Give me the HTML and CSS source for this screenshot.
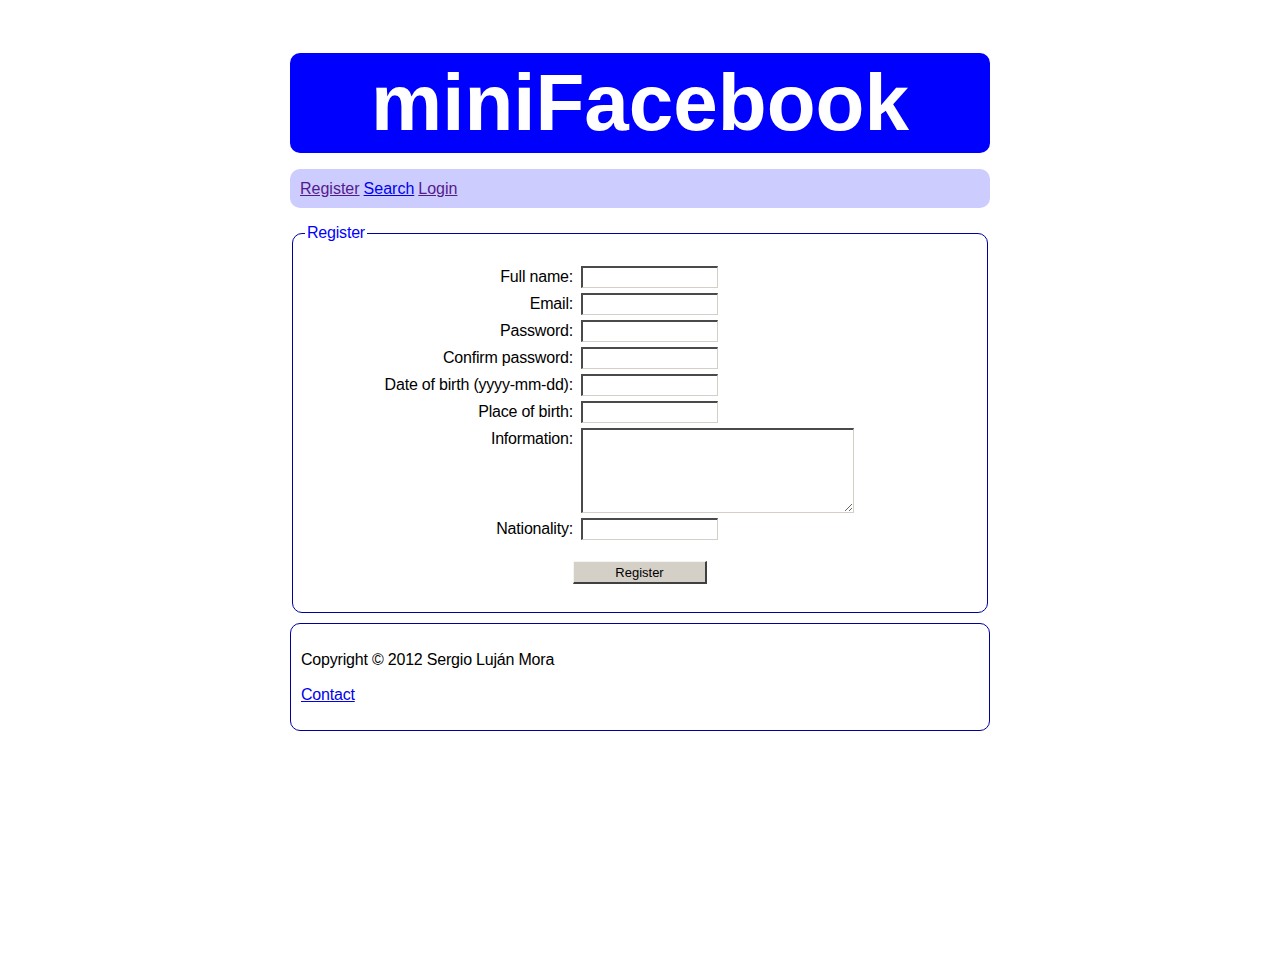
FILE: index.html
```html
<!DOCTYPE html>
<html>
<head>
<meta charset="utf-8">
<title>miniFacebook</title>
<link rel="stylesheet" href="styles.css">
</head>
<body>
<div class="page">
  <header class="header"><h1 class="title">miniFacebook</h1></header>
  <nav class="nav">
    <a class="visited" href="#">Register</a> <a href="#">Search</a> <a class="visited" href="#">Login</a>
  </nav>
  <form class="form">
    <fieldset class="fieldset">
      <legend class="legend">Register</legend>
      <div class="row"><label class="label">Full name:</label><input class="field" type="text"></div>
      <div class="row"><label class="label">Email:</label><input class="field" type="text"></div>
      <div class="row"><label class="label">Password:</label><input class="field" type="password"></div>
      <div class="row"><label class="label">Confirm password:</label><input class="field" type="password"></div>
      <div class="row"><label class="label">Date of birth (yyyy-mm-dd):</label><input class="field" type="text"></div>
      <div class="row"><label class="label">Place of birth:</label><input class="field" type="text"></div>
      <div class="row"><label class="label">Information:</label><textarea class="area"></textarea></div>
      <div class="row"><label class="label">Nationality:</label><input class="field" type="text"></div>
      <div class="actions"><button class="button" type="button">Register</button></div>
    </fieldset>
  </form>
  <footer class="footer">
    <p class="copy">Copyright © 2012 Sergio Luján Mora</p>
    <p class="copy"><a href="#">Contact</a></p>
  </footer>
</div>
</body>
</html>
```
FILE: styles.css
```css
html, body {
  margin: 0;
  padding: 0;
  background: #ffffff;
}
body {
  font-family: "Liberation Sans", Arial, sans-serif;
  font-size: 16px;
  color: #000000;
  letter-spacing: -0.2px;
}
.page {
  width: 700px;
  margin: 0 auto;
  padding-top: 53px;
}
.header {
  background: #0000ff;
  border-radius: 10px;
  height: 100px;
}
.title {
  margin: 0;
  color: #ffffff;
  font-size: 80px;
  font-weight: bold;
  line-height: 100px;
  text-align: center;
  letter-spacing: 0;
}
.nav {
  margin-top: 16px;
  background: #ccccff;
  border-radius: 10px;
  height: 39px;
  padding: 0 10px;
  display: flex;
  align-items: center;
  gap: 4px;
  line-height: 18px;
  letter-spacing: 0;
}
.nav a {
  color: #0000ee;
}
.nav a.visited {
  color: #551a8b;
}
.form {
  margin: 16px 0 0;
}
.fieldset {
  margin: 0 2px;
  border: 1px solid #00009c;
  border-radius: 10px;
  padding: 24px 12px 28px;
  display: flex;
  flex-direction: column;
  gap: 5px;
}
.legend {
  color: #0000ff;
  padding: 0 2px;
  margin-left: 0;
  line-height: 18px;
}
.row {
  display: flex;
  align-items: flex-start;
}
.label {
  width: 40%;
  flex: none;
  text-align: right;
  line-height: 18px;
  padding-top: 2px;
}
.field {
  margin: 0 0 0 8px;
  width: 137px;
  height: 22px;
  box-sizing: border-box;
  border-style: solid;
  border-width: 2px 1px 1px 2px;
  border-color: #4a4a4a #d4d0c8 #d4d0c8 #4a4a4a;
  padding: 1px 2px;
  font-family: "Liberation Sans", Arial, sans-serif;
  font-size: 13px;
  background: #ffffff;
}
.area {
  margin: 0 0 0 8px;
  width: 273px;
  height: 85px;
  box-sizing: border-box;
  border-style: solid;
  border-width: 2px 1px 1px 2px;
  border-color: #4a4a4a #d4d0c8 #d4d0c8 #4a4a4a;
  padding: 2px;
  font-family: "Liberation Mono", monospace;
  font-size: 13px;
  background: #ffffff;
}
.actions {
  display: flex;
  justify-content: center;
  margin-top: 16px;
}
.button {
  width: 134px;
  height: 23px;
  box-sizing: border-box;
  background: #d4d0c8;
  border-style: solid;
  border-width: 1px 2px 2px 1px;
  border-color: #f4f4f0 #404040 #404040 #f4f4f0;
  font-family: "Liberation Sans", Arial, sans-serif;
  font-size: 13px;
  color: #000000;
  padding: 0;
  letter-spacing: 0;
}
.footer {
  margin-top: 10px;
  border: 1px solid #00009c;
  border-radius: 10px;
  padding: 10px;
}
.copy {
  margin: 16px 0;
  line-height: 19px;
}
.copy a {
  color: #0000ee;
}
```
